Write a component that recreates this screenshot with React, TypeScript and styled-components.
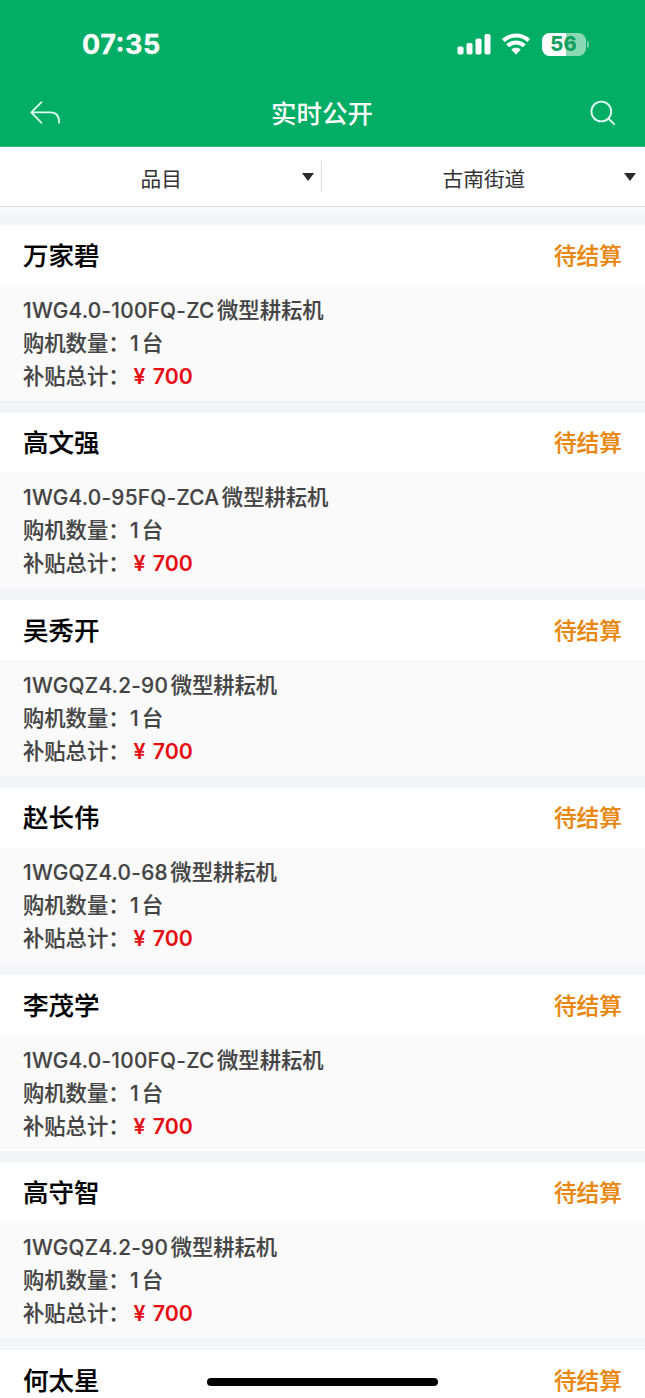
import React from 'react';
import styled, { createGlobalStyle } from 'styled-components';

const GlobalStyle = createGlobalStyle`
  * { box-sizing: border-box; }
  html, body { margin: 0; padding: 0; }
  body {
    background: #f3f6f8;
    font-family: Inter, "Noto Sans CJK SC", sans-serif;
    overflow: hidden;
  }
`;

const Screen = styled.div`
  position: relative;
  display: flex;
  flex-direction: column;
  width: 645px;
  height: 1398px;
  overflow: hidden;
  background: #f3f6f8;
`;

const Header = styled.header`
  flex: none;
  height: 147px;
  background: #02ae66;
  border-bottom: 1px solid #35b983;
  color: #fff;
`;

const StatusBar = styled.div`
  display: flex;
  align-items: center;
  justify-content: space-between;
  height: 88px;
  padding: 0 56px 0 82px;
`;

const Clock = styled.span`
  padding-top: 1px;
  font-size: 27px;
  font-weight: 700;
  letter-spacing: 0.5px;
  line-height: 32px;
  font-feature-settings: "case" 1;
  -webkit-text-stroke: 0.3px #fff;
`;

const Indicators = styled.div`
  display: flex;
  align-items: center;
  height: 24px;
  svg { display: block; }
`;

const Signal = styled.svg`
  width: 34px;
  height: 22px;
  margin-right: 11px;
`;

const Wifi = styled.svg`
  width: 28px;
  height: 22px;
  margin-right: 12px;
`;

const Battery = styled.div`
  display: flex;
  align-items: center;
`;

const BatteryBody = styled.div`
  width: 44px;
  height: 23px;
  border-radius: 7.5px;
  background: linear-gradient(to right, #fff 24px, #8ad9b4 24px);
  color: #149f60;
  font-size: 20px;
  font-weight: 800;
  line-height: 23px;
  letter-spacing: 0.2px;
  text-align: center;
  padding-right: 1px;
`;

const BatteryTip = styled.div`
  width: 2px;
  height: 7px;
  margin-left: 1px;
  border-radius: 0 3px 3px 0;
  background: #76d0a5;
`;

const NavBar = styled.div`
  display: grid;
  grid-template-columns: 90px 1fr 90px;
  align-items: center;
  height: 50px;
`;

const NavButton = styled.button<{ $end?: boolean }>`
  display: flex;
  justify-content: ${(p) => (p.$end ? 'flex-end' : 'flex-start')};
  padding: ${(p) => (p.$end ? '0 29px 0 0' : '0 0 0 30px')};
  border: 0;
  background: none;
  color: #e2fff2;
`;

const Title = styled.h1`
  margin: 0 1px 0 0;
  padding-top: 1px;
  text-align: center;
  font-size: 25.5px;
  font-weight: 500;
  line-height: 36px;
`;

const Filters = styled.div`
  flex: none;
  display: flex;
  align-items: center;
  height: 60px;
  background: #fff;
  border-bottom: 1.5px solid #dcdedf;
`;

const Filter = styled.div<{ $divided?: boolean }>`
  flex: ${(p) => (p.$divided ? '0 0 322px' : '1')};
  display: flex;
  align-items: center;
  height: 31px;
  padding-right: ${(p) => (p.$divided ? 7 : 9)}px;
  border-right: ${(p) => (p.$divided ? '1.5px solid #dedede' : '0')};
`;

const FilterLabel = styled.span<{ $indent: number }>`
  flex: 1;
  padding-left: ${(p) => p.$indent}px;
  padding-top: 6px;
  color: #333;
  font-size: 20.7px;
  line-height: 28px;
`;

const List = styled.main`
  flex: none;
  padding-top: 6.2px;
  background: #f9fafb;
`;

const Card = styled.section`
  height: 187.5px;
  border-top: 12px solid #f3f6f8;
`;

const CardHead = styled.div`
  display: flex;
  align-items: center;
  justify-content: space-between;
  height: 60px;
  padding: 1.5px 23px 0;
  background: #fff;
`;

const Name = styled.h2`
  margin: 0;
  color: #000;
  font-size: 25.5px;
  font-weight: 500;
  line-height: 36px;
  -webkit-text-stroke: 0.2px #000;
`;

const State = styled.span`
  color: #e9860e;
  font-size: 22.7px;
  font-weight: 500;
  line-height: 34px;
  -webkit-text-stroke: 0.2px #e9860e;
`;

const CardBody = styled.div`
  height: 115.5px;
  padding: 8.6px 23px 0;
  background: #fafafa;
`;

const Line = styled.div`
  height: 33px;
  color: #444;
  font-size: 21.3px;
  font-weight: 500;
  line-height: 33px;
  white-space: nowrap;
  -webkit-text-stroke: 0.15px currentColor;
`;

const Latin = styled.span`
  margin-right: 2.5px;
  font-size: 20.8px;
  letter-spacing: 0.25px;
`;

const Count = styled.span`
  margin: 0 3px 0 0.5px;
  font-size: 21px;
`;

const Amount = styled.span`
  margin-left: 4px;
  color: #e60d12;
  font-size: 21.3px;
  font-weight: 600;
  word-spacing: 2px;
  -webkit-text-stroke: 0;
`;

const HomeIndicator = styled.div`
  position: absolute;
  left: 207px;
  bottom: 12px;
  width: 231px;
  height: 8px;
  border-radius: 4px;
  background: #000;
`;

interface PurchaseRecord {
  name: string;
  model?: string;
}

const records: PurchaseRecord[] = [
  { name: '万家碧', model: '1WG4.0-100FQ-ZC' },
  { name: '高文强', model: '1WG4.0-95FQ-ZCA' },
  { name: '吴秀开', model: '1WGQZ4.2-90' },
  { name: '赵长伟', model: '1WGQZ4.0-68' },
  { name: '李茂学', model: '1WG4.0-100FQ-ZC' },
  { name: '高守智', model: '1WGQZ4.2-90' },
  { name: '何太星' },
];

const Caret = () => (
  <svg width="12" height="8" viewBox="0 0 12 8">
    <path d="M0 0H12L6 8Z" fill="#2b2b2b" />
  </svg>
);

export default function App() {
  return (
    <>
      <GlobalStyle />
      <Screen>
        <Header>
          <StatusBar>
            <Clock>07:35</Clock>
            <Indicators>
              <Signal viewBox="0 0 34 22" fill="#fff">
                <rect x="0.5" y="13.5" width="6" height="8" rx="1.8" />
                <rect x="9.5" y="10" width="6" height="11.5" rx="1.8" />
                <rect x="18.5" y="5.5" width="6" height="16" rx="1.8" />
                <rect x="27.5" y="1" width="6" height="20.5" rx="1.8" />
              </Signal>
              <Wifi viewBox="0 0 28 22" fill="none" stroke="#fff" strokeWidth="4">
                <path d="M1.3 7.6C8.5 0.9 19.5 0.9 26.7 7.6" />
                <path d="M5.7 12.8C10.4 8.4 17.6 8.4 22.3 12.8" />
                <path d="M9.2 16.6C12 14.1 16 14.1 18.8 16.6L14 21.5Z" fill="#fff" stroke="none" />
              </Wifi>
              <Battery>
                <BatteryBody>56</BatteryBody>
                <BatteryTip />
              </Battery>
            </Indicators>
          </StatusBar>
          <NavBar>
            <NavButton aria-label="返回">
              <svg width="32" height="24" viewBox="0 0 32 24" fill="none" stroke="currentColor" strokeWidth="1.7" strokeLinecap="round" strokeLinejoin="round">
                <path d="M11.5 1.2L1.3 11.4L11.5 21.8M1.3 11.4H20.5C25.8 11.4 29.2 15 29.2 21.8" />
              </svg>
            </NavButton>
            <Title>实时公开</Title>
            <NavButton $end aria-label="搜索">
              <svg width="26" height="26" viewBox="0 0 26 26" fill="none" stroke="currentColor" strokeWidth="1.8" strokeLinecap="round">
                <circle cx="11.3" cy="11.5" r="9.9" />
                <path d="M18.3 18.5L24.3 24.2" />
              </svg>
            </NavButton>
          </NavBar>
        </Header>
        <Filters>
          <Filter $divided>
            <FilterLabel $indent={140.5}>品目</FilterLabel>
            <Caret />
          </Filter>
          <Filter>
            <FilterLabel $indent={120.5}>古南街道</FilterLabel>
            <Caret />
          </Filter>
        </Filters>
        <List>
          {records.map((r) => (
            <Card key={r.name}>
              <CardHead>
                <Name>{r.name}</Name>
                <State>待结算</State>
              </CardHead>
              {r.model && (
                <CardBody>
                  <Line><Latin>{r.model}</Latin>微型耕耘机</Line>
                  <Line>购机数量：<Count>1</Count>台</Line>
                  <Line>补贴总计：<Amount>¥ 700</Amount></Line>
                </CardBody>
              )}
            </Card>
          ))}
        </List>
        <HomeIndicator />
      </Screen>
    </>
  );
}
